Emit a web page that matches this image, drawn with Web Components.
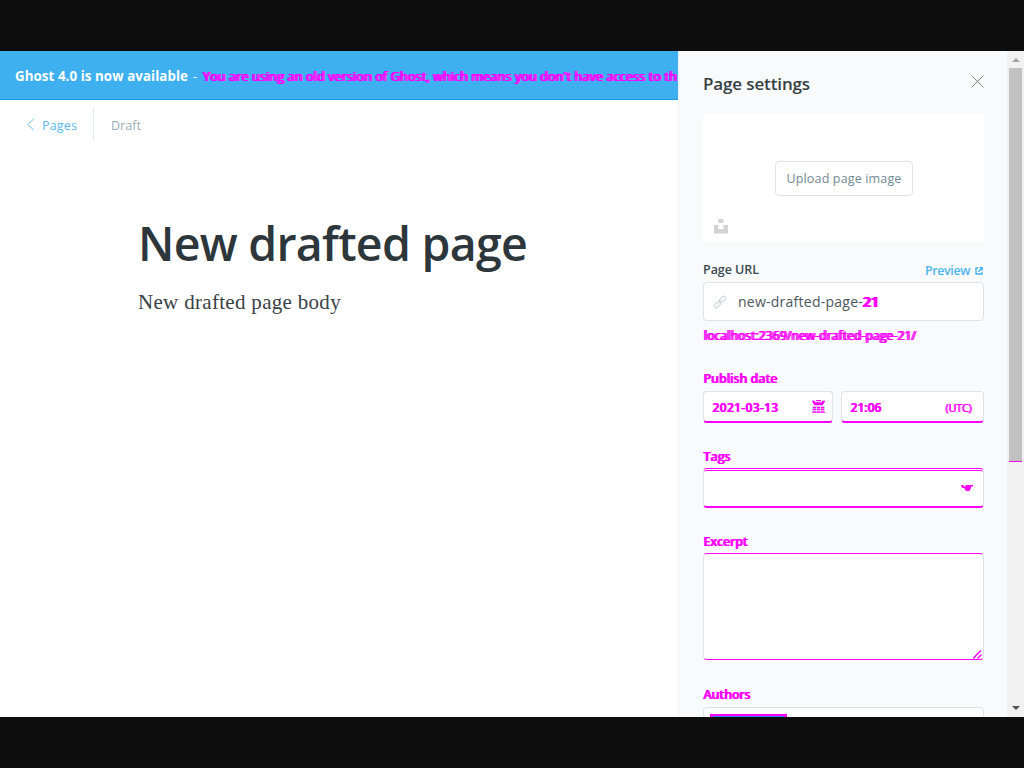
<!DOCTYPE html>
<html lang="en"><head><meta charset="utf-8"><title>Page editor</title>
<style>html,body{margin:0;background:#0d0d0d;overflow:hidden;font-family:"Open Sans","Noto Sans",sans-serif}</style></head>
<body><editor-app></editor-app>
<script>
const define=(name,html,setup)=>customElements.define(name,class extends HTMLElement{
  constructor(){super();this.attachShadow({mode:'open'}).innerHTML=html;}
  connectedCallback(){if(setup)setup(this);}
});
// Text run whose tracking is adjusted to span a given width.
define('fit-text','<style>:host{display:inline-block;white-space:pre;flex:none}</style><slot></slot>',el=>{
  const target=+el.getAttribute('w'),n=el.textContent.length;
  el.style.letterSpacing='0px';
  const natural=el.getBoundingClientRect().width;
  if(natural)el.style.letterSpacing=((target-natural)/n)+'px';
});
define('upgrade-banner',`<style>
:host{display:flex;box-sizing:border-box;align-items:center;height:49px;background:#3eb0ef;border-bottom:1px solid #1f9ae0;padding:2px 0 0 15px;overflow:hidden;color:#fff;font-size:13.3px;line-height:20px;white-space:pre}
.bold{font-weight:700}.dash{width:14px;flex:none;text-align:center}.diff{color:#f0f;font-size:12.5px;margin-top:1px;text-shadow:1px 0 #f0f,2px 0 #f0f}
</style><fit-text class="bold" w="173">Ghost 4.0 is now available</fit-text><span class="dash">-</span><fit-text class="diff" w="474">You are using an old version of Ghost, which means you don't have access to th</fit-text>`);
define('page-nav',`<style>
:host{display:flex;align-items:center;height:34px;margin-top:7px;padding-left:26px;font-size:12.5px;line-height:20px}
svg{width:9px;height:13px;margin-right:7px}fit-text{margin-top:3px}.back{color:#5ab9ee}.status{color:#9baeb8}
i{width:1px;height:34px;background:#e5eaed;margin:0 17px 0 16px}
</style><svg viewBox="0 0 9 13"><path d="M8 .8 1.5 6.5 8 12.2" fill="none" stroke="#78c6f1"/></svg><fit-text class="back" w="35">Pages</fit-text><i></i><fit-text class="status" w="30">Draft</fit-text>`);
define('page-document',`<style>
:host{display:block;padding:70px 0 0 138px}
h1{margin:0;color:#2c363b;font-size:46.5px;font-weight:600;line-height:64px;height:66px}
p{margin:10px 0 0;color:#3a4146;font:21px/30px "Liberation Serif",serif}
</style><h1><fit-text w="389">New drafted page</fit-text></h1><p><fit-text w="203">New drafted page body</fit-text></p>`);
define('image-uploader',`<style>
:host{display:flex;box-sizing:border-box;height:128px;margin-top:18px;background:#fff;border-radius:4px;align-items:center;justify-content:center;position:relative}
button{box-sizing:border-box;width:138px;height:35px;margin:1px 0 0 1px;padding:0;border:1px solid #dce6ea;border-radius:4px;background:#fff;color:#738a94;font:12.5px/20px "Open Sans",sans-serif}
svg{position:absolute;left:11px;bottom:8px;width:14px;height:15px}
</style><button><fit-text w="115">Upload page image</fit-text></button><svg viewBox="0 0 14 15"><path d="M4.3 0h5.2v4H4.3zM0 6h4.3v4.3h5.2V6H14v8.5H0z" fill="#d3d3d3"/></svg>`);
define('text-box',`<style>
:host{display:flex;box-sizing:border-box;align-items:center;background:#fff;border:1px solid #dae4e9;border-radius:4px;overflow:hidden}
</style><slot></slot>`);
define('field-label',`<style>:host{display:flex;height:20px;align-items:center;justify-content:space-between;color:#394b53;font-size:12.5px;font-weight:600;line-height:20px}</style><slot></slot>`);
define('settings-panel',`<style>
:host{display:block;box-sizing:border-box;width:329px;height:666px;padding:21px 23px 0 24px;background:#f8fafc;border-left:1px solid #edf3f7;overflow:hidden}
header{display:flex;height:24px;justify-content:space-between;align-items:center;color:#343f44;font-size:17px;font-weight:600;line-height:24px}
header fit-text{margin-top:0}
header svg{width:13px;height:13px;margin:-5px 0 0 0}
.diff{color:#f0f;text-shadow:1px 0 #f0f}
field-label .diff{margin-top:2px}
field-label.url{margin-top:18px;margin-bottom:2px}
.preview{display:flex;align-items:center;color:#4fb5ed;font-weight:600;margin-top:1px;margin-right:1px}
.preview svg{width:8px;height:8px;margin-left:5px}
.slug{height:39px;color:#4b575d;font-size:14px;padding-left:9px}
.slug .link{width:14px;height:14px;margin-right:11px}
.slug .diff{font-weight:600;text-shadow:1px 0 #f0f,-1px 0 #f0f}
.hint{height:20px;margin-top:5px;font-size:12px;line-height:20px}
.hint .diff{text-shadow:1px 0 #f0f,2px 0 #f0f}
field-label.publish{margin-top:22px;margin-bottom:3px}
.pair{display:grid;grid-template-columns:130px 143px;gap:8px}
.pair text-box{height:32px;padding:2px 12px 0 8px;justify-content:space-between;border-bottom:2px solid #f0f;font-size:12px;font-weight:600}
.pair .diff{text-shadow:1px 0 #f0f}
.pair .zone{font-size:11px;font-weight:400;text-shadow:1px 0 #f0f}
.pair .calendar{width:13px;height:13px;margin:-2px -5px 0 0}
field-label.tags{margin-top:23px;margin-bottom:2px}
.tag{height:40px;justify-content:flex-end;padding:0 10px 2px 0;border-top:3px double #f0f;border-bottom:2px solid #f0f}
.tag svg{width:12px;height:8px}
field-label.excerpt{margin-top:23px;margin-bottom:2px}
.area{height:107px;border-top-color:#f0f;border-bottom-color:#f0f;align-items:flex-end;justify-content:flex-end}
.area svg{width:10px;height:10px}
field-label.authors{margin-top:24px;margin-bottom:3px}
.author{height:40px;align-items:flex-start;padding:6px}
.token{width:77px;height:24px;background:#3e80f0;border:3px solid #f0f;border-top-width:2px;box-sizing:border-box;flex:none}
</style>
<header><fit-text w="107">Page settings</fit-text><svg viewBox="0 0 13 13"><path d="m.5.5 12 12M12.5.5l-12 12" fill="none" stroke="#737b80" stroke-width=".9"/></svg></header>
<image-uploader></image-uploader>
<field-label class="url"><fit-text w="56">Page URL</fit-text><span class="preview"><fit-text w="45">Preview</fit-text><svg viewBox="0 0 8 8"><path d="M3.2 1H1v6h6V4.8M4.5.7h2.8v2.8M7 1 3.3 4.7" fill="none" stroke="#3eb0ef" stroke-width="1.3"/></svg></span></field-label>
<text-box class="slug"><svg class="link" viewBox="0 0 14 14" fill="none" stroke="#c9d6dc"><rect x="-3.6" y="-2" width="7.2" height="4" rx="2" transform="translate(4.4 9.6) rotate(-45)"/><rect x="-3.6" y="-2" width="7.2" height="4" rx="2" transform="translate(9.6 4.4) rotate(-45)"/><path d="m5 9 4-4"/></svg><fit-text w="125">new-drafted-page-</fit-text><fit-text class="diff" w="16">21</fit-text></text-box>
<div class="hint"><fit-text class="diff" w="212">localhost:2369/new-drafted-page-21/</fit-text></div>
<field-label class="publish"><fit-text class="diff" w="74">Publish date</fit-text></field-label>
<div class="pair"><text-box><fit-text class="diff" w="66">2021-03-13</fit-text><svg class="calendar" viewBox="0 0 13 13" fill="none" stroke="#f0f"><path d="M0 1.5h3M4 .5h5M10 1.5h3M1 3h11M2 4.5h9M0 7.5h13M1 9.5h11M0 12h13" stroke-width="1.7"/><path d="M.5 6v6M4.5 7v5M8.5 7v5M12.5 6v6" stroke="#cbd8df"/></svg></text-box><text-box><fit-text class="diff" w="31">21:06</fit-text><fit-text class="diff zone" w="26">(UTC)</fit-text></text-box></div>
<field-label class="tags"><fit-text class="diff" w="27">Tags</fit-text></field-label>
<text-box class="tag"><svg viewBox="0 0 12 8"><path d="M0 1h2l2 2 1-2h7v1.5h-2V4L8.5 7H5L3 4H1z" fill="#f0f"/></svg></text-box>
<field-label class="excerpt"><fit-text class="diff" w="44">Excerpt</fit-text></field-label>
<text-box class="area"><svg viewBox="0 0 10 10"><path d="m0 9.5 8-8M4.5 9.5l4-4" fill="none" stroke="#f0f" stroke-width="1.4"/></svg></text-box>
<field-label class="authors"><fit-text class="diff" w="47">Authors</fit-text></field-label>
<text-box class="author"><span class="token"></span></text-box>`);
define('scroll-rail',`<style>
:host{display:flex;flex-direction:column;box-sizing:border-box;width:17px;height:666px;background:#f1f1f1;align-items:center}
.up{width:8px;height:4px;margin:7px 0 6px}.thumb{width:13px;height:393px;background:#c1c1c1;border-bottom:1px solid #f0f}.down{width:8px;height:4px;margin-top:auto;margin-bottom:7px}
</style><svg class="up" viewBox="0 0 8 4"><path d="m0 4 4-4 4 4z" fill="#a3a3a3"/></svg><span class="thumb"></span><svg class="down" viewBox="0 0 8 4"><path d="m0 0 4 4 4-4z" fill="#505050"/></svg>`);
define('editor-app',`<style>
:host{display:grid;grid-template-columns:678px 329px 17px;height:666px;width:1024px;margin:0;padding:51px 0;background:#0d0d0d}
main{background:#fff;height:666px;overflow:hidden}
</style><main><upgrade-banner></upgrade-banner><page-nav></page-nav><page-document></page-document></main><settings-panel></settings-panel><scroll-rail></scroll-rail>`);
</script></body></html>
